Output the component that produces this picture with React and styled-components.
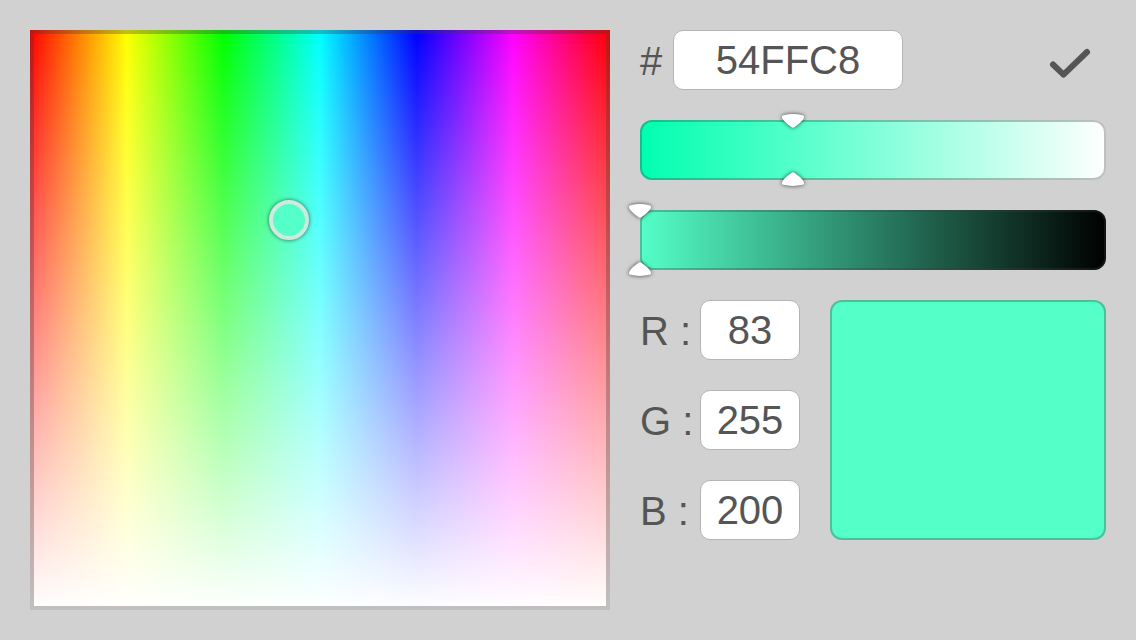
import React, { useState } from "react";
import styled, { createGlobalStyle } from "styled-components";

const edge = "rgba(60, 60, 60, 0.32)";
const ink = "#555555";

const GlobalStyle = createGlobalStyle`
  *, *::before, *::after { box-sizing: border-box; }
  body {
    margin: 0;
    background: #d1d1d1;
    color: ${ink};
    font: 40px/60px "Liberation Sans", Arial, sans-serif;
  }
`;

const Page = styled.main`
  display: grid;
  grid-template-columns: minmax(0, 580fr) minmax(0, 466fr);
  align-items: start;
  gap: 30px;
  padding: 30px;
`;

const Spectrum = styled.section`
  position: relative;
  aspect-ratio: 1;
  background:
    linear-gradient(to bottom, rgba(255, 255, 255, 0), #fff),
    linear-gradient(to right, #f00, #ff0, #0f0, #0ff, #00f, #f0f, #f00);

  &::after {
    content: "";
    position: absolute;
    inset: 0;
    border: 4px solid ${edge};
    pointer-events: none;
  }
`;

const Cursor = styled.span`
  position: absolute;
  left: ${(p) => p.$x}%;
  top: ${(p) => p.$y}%;
  width: 40px;
  height: 40px;
  border: 4px solid #cdeade;
  border-radius: 50%;
  background: #54ffc8;
  box-shadow: 0 0 4px rgba(0, 0, 0, 0.6);
  transform: translate(-50%, -50%);
`;

const Controls = styled.form`
  display: flex;
  flex-direction: column;
  gap: 30px;
`;

const HexRow = styled.div`
  display: flex;
  align-items: center;
`;

const Field = styled.label`
  display: flex;
  align-items: center;
`;

const FieldName = styled.span`
  width: ${(p) => p.$width}px;
  padding-top: 2px;
  line-height: 58px;
  white-space: nowrap;
`;

const TextBox = styled.input`
  width: ${(p) => p.$width}px;
  height: 60px;
  padding: 0;
  border: 1px solid #b4b4b4;
  border-radius: 10px;
  background: #fff;
  color: inherit;
  font: inherit;
  text-align: center;
  outline: none;
`;

const Confirm = styled.button`
  display: flex;
  margin-left: auto;
  padding: 10px 14px;
  border: 0;
  background: none;
  color: ${ink};
  cursor: pointer;
`;

const Bar = styled.div`
  position: relative;
  height: 60px;
  border-radius: 12px;
  background: linear-gradient(to right, ${(p) => p.$from}, ${(p) => p.$to});

  &::before {
    content: "";
    position: absolute;
    inset: 0;
    border: 2px solid ${edge};
    border-radius: inherit;
  }
`;

const Range = styled.input`
  position: absolute;
  inset: 0;
  width: 100%;
  height: 100%;
  margin: 0;
  opacity: 0;
  cursor: pointer;
`;

const Marker = styled.svg`
  position: absolute;
  width: 30px;
  height: 20px;
  overflow: visible;
  pointer-events: none;
  filter: drop-shadow(0 0 2px rgba(0, 0, 0, 0.7));
  ${(p) =>
    p.$bottom
      ? "bottom: -10px; transform: translateX(-50%) scaleY(-1);"
      : "top: -10px; transform: translateX(-50%);"}
`;

const Lower = styled.div`
  display: flex;
  gap: 30px;
`;

const Channels = styled.div`
  display: flex;
  flex-direction: column;
  gap: 30px;
`;

const Swatch = styled.div`
  flex: 1;
  border: 2px solid ${edge};
  border-radius: 12px;
  background: #54ffc8 border-box;
`;

function SliderMarker({ value, bottom }) {
  return (
    <Marker viewBox="0 0 30 20" $bottom={bottom} style={{ left: `${value}%` }} aria-hidden="true">
      <path
        d="M4 6.8C4.1 5.8 4.8 5.4 5.6 5.2C11.5 3.7 18.5 3.7 24.4 5.2C25.2 5.4 25.9 5.8 26 6.8C26.1 8 25.2 9.5 24.1 10.8C22.2 13 19.4 15 16.7 17C15.5 17.9 14.5 17.9 13.3 17C10.6 15 7.8 13 5.9 10.8C4.8 9.5 3.9 8 4 6.8Z"
        fill="#fff"
      />
    </Marker>
  );
}

function Slider({ label, from, to, initial }) {
  const [value, setValue] = useState(initial);
  return (
    <Bar $from={from} $to={to}>
      <Range
        type="range"
        aria-label={label}
        min="0"
        max="100"
        step="any"
        value={value}
        onChange={(e) => setValue(Number(e.target.value))}
      />
      <SliderMarker value={value} />
      <SliderMarker value={value} bottom />
    </Bar>
  );
}

const channels = [
  ["R", 83],
  ["G", 255],
  ["B", 200],
];

export default function App() {
  return (
    <>
      <GlobalStyle />
      <Page>
        <Spectrum aria-label="Hue and saturation">
          <Cursor $x={44.7} $y={32.8} />
        </Spectrum>
        <Controls onSubmit={(e) => e.preventDefault()}>
          <HexRow>
            <Field>
              <FieldName $width={33}>#</FieldName>
              <TextBox $width={230} defaultValue="54FFC8" />
            </Field>
            <Confirm type="submit" aria-label="Confirm">
              <svg width="44" height="40" viewBox="0 0 44 40" fill="none" aria-hidden="true">
                <path d="M5 24.5L15.5 34.7L39 12" stroke="currentColor" strokeWidth="6" strokeLinecap="round" strokeLinejoin="round" />
              </svg>
            </Confirm>
          </HexRow>
          <Slider label="Tint" from="#00ffb0" to="#ffffff" initial={32.8} />
          <Slider label="Shade" from="#54ffc8" to="#000000" initial={0} />
          <Lower>
            <Channels>
              {channels.map(([name, value]) => (
                <Field key={name}>
                  <FieldName $width={60}>{name} :</FieldName>
                  <TextBox $width={100} inputMode="numeric" defaultValue={value} />
                </Field>
              ))}
            </Channels>
            <Swatch />
          </Lower>
        </Controls>
      </Page>
    </>
  );
}
